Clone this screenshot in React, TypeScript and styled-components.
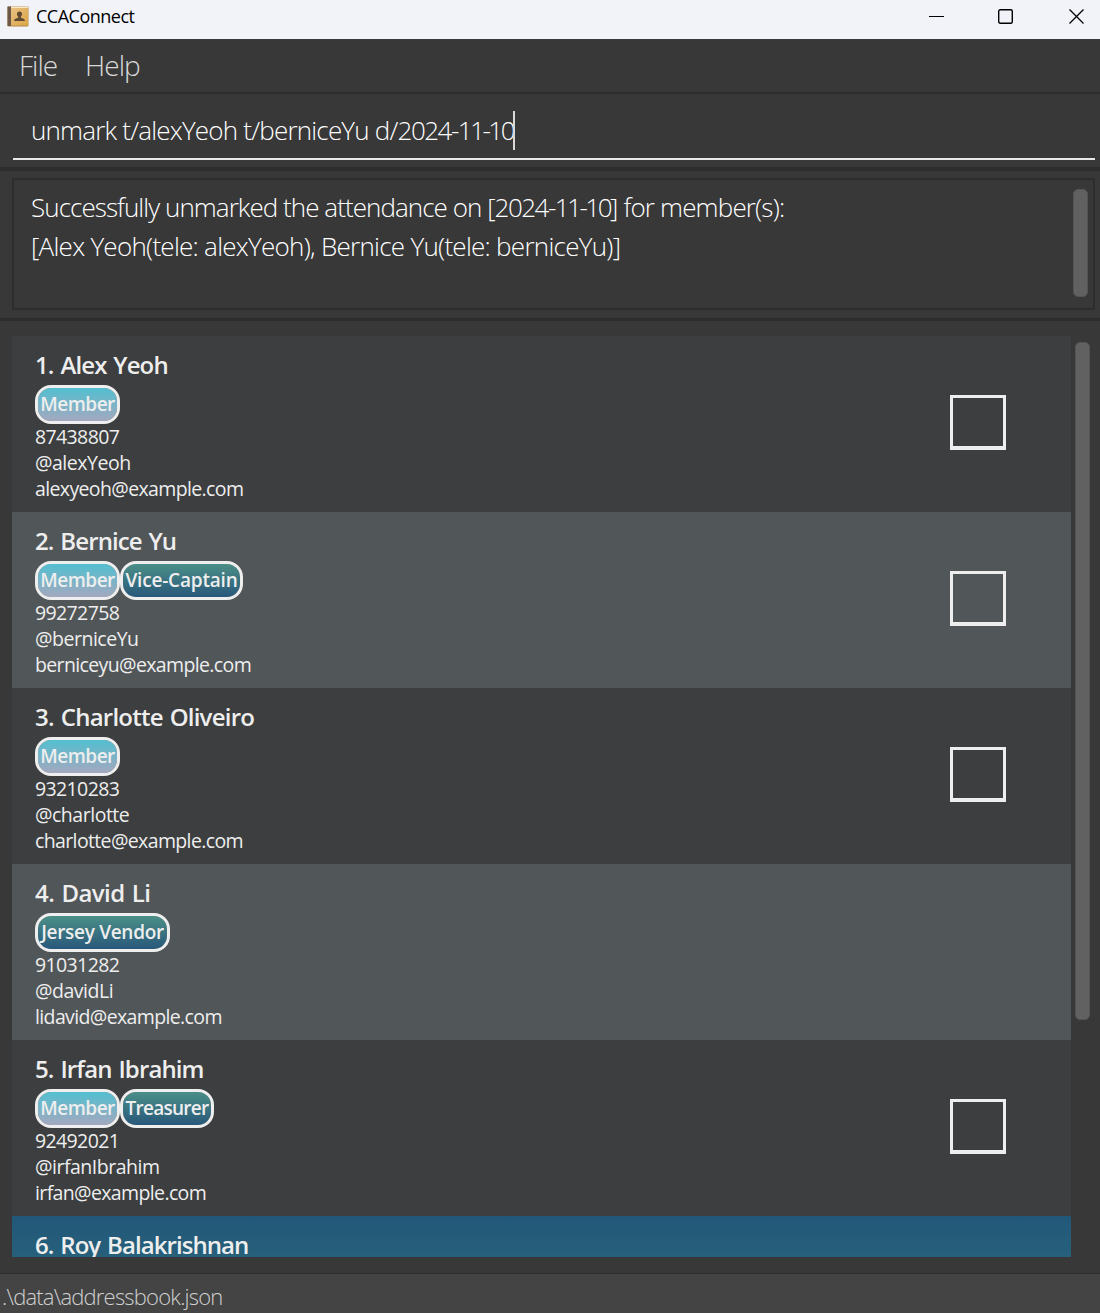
import React from "react";
import styled, { createGlobalStyle } from "styled-components";

const GlobalStyle = createGlobalStyle`
  *, *::before, *::after { box-sizing: border-box; }
  html, body { margin: 0; padding: 0; background: #383838; }
  body { font-family: "Open Sans", "Noto Sans", sans-serif; }
`;

const Window = styled.div`
  width: 1100px;
  height: 1313px;
  display: flex;
  flex-direction: column;
  overflow: hidden;
  background: #383838;
  color: #fff;
  white-space: nowrap;
`;

const TitleBar = styled.header`
  flex: none;
  height: 39px;
  display: flex;
  align-items: center;
  padding: 0 16px 6px 7px;
  background: #f1f3f9;
  color: #000;
`;

const AppTitle = styled.span`
  flex: 1;
  margin-left: 7px;
  padding-bottom: 2px;
  font-size: 18px;
  line-height: 24px;
  letter-spacing: -0.5px;
`;

const WindowControls = styled.div`
  display: flex;
  gap: 54px;
  align-items: center;

  & > :last-child {
    margin-left: 2px;
  }
`;

const MenuBar = styled.nav`
  flex: none;
  height: 55px;
  display: flex;
  gap: 28px;
  padding: 6px 19px 0;
  border-bottom: 2px solid #2d2d2d;
  color: #d9d9d9;
`;

const MenuItem = styled.span`
  font-size: 28px;
  font-weight: 300;
  line-height: 40px;
  letter-spacing: -1px;
`;

const CommandPane = styled.section`
  flex: none;
  height: 77px;
  padding: 15px 5px 0 13px;
  border-bottom: 4px solid #2d2d2d;
`;

const CommandField = styled.div`
  height: 51px;
  display: flex;
  align-items: flex-start;
  padding-left: 18px;
  border-bottom: 2px solid #e8e8e8;
`;

const CommandText = styled.span`
  font-size: 26px;
  font-weight: 300;
  line-height: 42px;
`;

const Run = styled.span<{ $tracking: number }>`
  letter-spacing: ${(p) => p.$tracking}px;
`;

const Caret = styled.span`
  width: 2px;
  height: 39px;
  margin-top: 2px;
  background: #d8d8d8;
`;

const ResultPane = styled.section`
  flex: none;
  height: 150px;
  padding: 7px 5px 10px 12px;
  border-bottom: 3px solid #2d2d2d;
`;

const ResultBox = styled.div`
  height: 132px;
  display: flex;
  justify-content: space-between;
  padding: 8px 5px 0 17px;
  border: 2px solid #2d2d2d;
`;

const ResultText = styled.div`
  font-size: 26px;
  font-weight: 300;
  line-height: 39px;
`;

const ScrollThumb = styled.div<{ $height: number }>`
  flex: none;
  width: 15px;
  height: ${(p) => p.$height}px;
  border-radius: 5px;
  border: 1px solid #545454;
  background: #616161;
`;

const ResultTrack = styled.div`
  padding-top: 1px;
`;

const ListPane = styled.section`
  flex: none;
  height: 953px;
  display: flex;
  gap: 4px;
  padding: 15px 0 16px 12px;
  border-bottom: 1px solid #2c2c2c;
`;

const List = styled.div`
  width: 1059px;
  height: 921px;
  overflow: hidden;
`;

const ListTrack = styled.div`
  padding-top: 6px;
`;

type Tone = "dark" | "light" | "selected";
const tones: Record<Tone, string> = {
  dark: "#3c3e3f",
  light: "#515658",
  selected: "linear-gradient(#225779, #27627b 50px)",
};

const Card = styled.article<{ $tone: Tone }>`
  height: 176px;
  display: flex;
  justify-content: space-between;
  padding: 10px 65px 0 23px;
  background: ${(p) => tones[p.$tone]};
  color: #eeeeee;
`;

const Name = styled.h2<{ $tracking: number }>`
  margin: 0 0 2px;
  font-size: 24px;
  font-weight: 600;
  line-height: 37px;
  letter-spacing: ${(p) => p.$tracking}px;
  word-spacing: 1.5px;
`;

const Tags = styled.div`
  display: flex;
  height: 39px;
`;

const Tag = styled.span<{ $member: boolean; $width: number; $tracking: number }>`
  display: flex;
  justify-content: center;
  width: ${(p) => p.$width}px;
  height: 39px;
  border: 3px solid #eeeeee;
  border-radius: 16px;
  background: ${(p) =>
    p.$member
      ? "linear-gradient(#52bfd0, #a3a8bf) padding-box"
      : "linear-gradient(#4b8f88, #28587a) padding-box"};
  font-size: 19px;
  font-weight: 600;
  line-height: 32px;
  letter-spacing: ${(p) => p.$tracking}px;
`;

const Detail = styled.div<{ $tracking: number }>`
  font-size: 19.5px;
  line-height: 26px;
  letter-spacing: ${(p) => p.$tracking}px;
`;

const Checkbox = styled.div`
  width: 56px;
  height: 55px;
  margin-top: 49px;
  border: 3px solid #eeeeee;
  border-bottom-width: 4px;
`;

const StatusBar = styled.footer`
  flex: 1;
  padding-left: 2px;
  background: #444444;
  color: #d0d0d0;
`;

const StatusText = styled.span`
  display: block;
  font-size: 22px;
  font-weight: 300;
  line-height: 45px;
  letter-spacing: -0.8px;
`;

interface TagData {
  label: string;
  width: number;
  tracking: number;
}

interface Person {
  name: string;
  tracking: number;
  tags: TagData[];
  phone?: string;
  handle?: string;
  email?: string;
  attendance: boolean;
}

const member: TagData = { label: "Member", width: 85, tracking: -0.5 };

const people: Person[] = [
  {
    name: "Alex Yeoh",
    tracking: -0.88,
    tags: [member],
    phone: "87438807",
    handle: "@alexYeoh",
    email: "alexyeoh@example.com",
    attendance: true,
  },
  {
    name: "Bernice Yu",
    tracking: -0.9,
    tags: [member, { label: "Vice-Captain", width: 123, tracking: -0.2 }],
    phone: "99272758",
    handle: "@berniceYu",
    email: "berniceyu@example.com",
    attendance: true,
  },
  {
    name: "Charlotte Oliveiro",
    tracking: -0.77,
    tags: [member],
    phone: "93210283",
    handle: "@charlotte",
    email: "charlotte@example.com",
    attendance: true,
  },
  {
    name: "David Li",
    tracking: -0.56,
    tags: [{ label: "Jersey Vendor", width: 135, tracking: -0.3 }],
    phone: "91031282",
    handle: "@davidLi",
    email: "lidavid@example.com",
    attendance: false,
  },
  {
    name: "Irfan Ibrahim",
    tracking: -0.88,
    tags: [member, { label: "Treasurer", width: 94, tracking: -0.75 }],
    phone: "92492021",
    handle: "@irfanIbrahim",
    email: "irfan@example.com",
    attendance: true,
  },
  { name: "Roy Balakrishnan", tracking: -0.93, tags: [], attendance: false },
];

const BookIcon = () => (
  <svg width="22" height="21" viewBox="0 0 22 21">
    <defs>
      <linearGradient id="cover" x1="0" y1="0" x2="1" y2="1">
        <stop offset="0" stopColor="#e9c185" />
        <stop offset="1" stopColor="#dba544" />
      </linearGradient>
    </defs>
    <rect x="0.5" y="0.5" width="21" height="20" rx="1" fill="#b58a4a" />
    <rect x="4" y="2" width="17" height="17.5" fill="url(#cover)" />
    <rect x="4" y="0.8" width="17" height="1.2" fill="#f8e8c8" />
    <rect x="0.5" y="0.5" width="3.5" height="19.5" fill="#6d5848" />
    <path
      d="M12.5 5.5c-1.7 0-2.7 1.2-2.5 2.9.1 1 .6 1.8 1.2 2.3v1.1c-1.8.4-4.2 1.2-4.2 3.2h11c0-2-2.4-2.8-4.2-3.2v-1.1c.6-.5 1.1-1.3 1.2-2.3.2-1.7-.8-2.9-2.5-2.9z"
      fill="#5e4a33"
    />
  </svg>
);

const App = () => (
  <>
    <GlobalStyle />
    <Window>
      <TitleBar>
        <BookIcon />
        <AppTitle>CCAConnect</AppTitle>
        <WindowControls>
          <svg width="15" height="15" viewBox="0 0 15 15">
            <path d="M0 7.5H15" stroke="#000" />
          </svg>
          <svg width="15" height="15" viewBox="0 0 15 15">
            <rect x="0.7" y="0.7" width="13.6" height="13.6" rx="1.5" fill="none" stroke="#000" strokeWidth="1.4" />
          </svg>
          <svg width="15" height="15" viewBox="0 0 15 15">
            <path d="M0.5 0.5L14.5 14.5M14.5 0.5L0.5 14.5" stroke="#000" strokeWidth="1.3" />
          </svg>
        </WindowControls>
      </TitleBar>
      <MenuBar>
        <MenuItem>File</MenuItem>
        <MenuItem>Help</MenuItem>
      </MenuBar>
      <CommandPane>
        <CommandField>
          <CommandText>
            <Run $tracking={-0.8}>unmark t/alexYeoh t/berniceYu d/</Run>
            <Run $tracking={-1.5}>2024-</Run>
            <Run $tracking={-2.5}>11-10</Run>
          </CommandText>
          <Caret />
        </CommandField>
      </CommandPane>
      <ResultPane>
        <ResultBox>
          <div>
            <ResultText>
              <Run $tracking={-0.95}>Successfully unmarked the attendance on [</Run>
              <Run $tracking={-1.5}>2024-</Run>
              <Run $tracking={-2.5}>11-10</Run>
              <Run $tracking={-0.83}>] for member(s):</Run>
            </ResultText>
            <ResultText>
              <Run $tracking={-0.73}>[Alex Yeoh(tele: alexYeoh), Bernice Yu(tele: berniceYu)]</Run>
            </ResultText>
          </div>
          <ResultTrack>
            <ScrollThumb $height={108} />
          </ResultTrack>
        </ResultBox>
      </ResultPane>
      <ListPane>
        <List>
          {people.map((person, i) => (
            <Card
              key={person.name}
              $tone={i === people.length - 1 ? "selected" : i % 2 ? "light" : "dark"}
            >
              <div>
                <Name $tracking={person.tracking}>
                  {i + 1}. {person.name}
                </Name>
                <Tags>
                  {person.tags.map((tag) => (
                    <Tag
                      key={tag.label}
                      $member={tag.label === "Member"}
                      $width={tag.width}
                      $tracking={tag.tracking}
                    >
                      {tag.label}
                    </Tag>
                  ))}
                </Tags>
                {person.phone && <Detail $tracking={-0.62}>{person.phone}</Detail>}
                {person.handle && <Detail $tracking={-0.48}>{person.handle}</Detail>}
                {person.email && <Detail $tracking={-0.63}>{person.email}</Detail>}
              </div>
              {person.attendance && <Checkbox />}
            </Card>
          ))}
        </List>
        <ListTrack>
          <ScrollThumb $height={678} />
        </ListTrack>
      </ListPane>
      <StatusBar>
        <StatusText>.\data\addressbook.json</StatusText>
      </StatusBar>
    </Window>
  </>
);

export default App;
